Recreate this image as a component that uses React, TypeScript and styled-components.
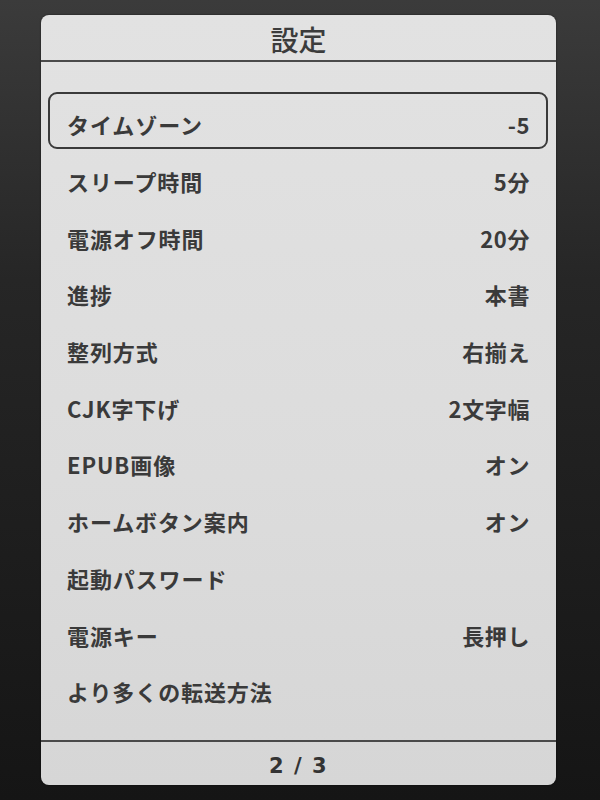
import React from 'react'
import styled, { createGlobalStyle } from 'styled-components'

interface SettingItem {
  label: string
  value?: string
}

const items: SettingItem[] = [
  { label: 'タイムゾーン', value: '-5' },
  { label: 'スリープ時間', value: '5分' },
  { label: '電源オフ時間', value: '20分' },
  { label: '進捗', value: '本書' },
  { label: '整列方式', value: '右揃え' },
  { label: 'CJK字下げ', value: '2文字幅' },
  { label: 'EPUB画像', value: 'オン' },
  { label: 'ホームボタン案内', value: 'オン' },
  { label: '起動パスワード' },
  { label: '電源キー', value: '長押し' },
  { label: 'より多くの転送方法' },
]

const SELECTED = 0

const App: React.FC = () => {
  return (
    <>
      <GlobalStyle />
      <Bezel>
        <Screen>
          {/* 上部タイトル */}
          <Header>設定</Header>

          {/* 設定リスト */}
          <List>
            {items.map((item, idx) => (
              <Row key={item.label} $selected={idx === SELECTED}>
                <Label>{item.label}</Label>
                {item.value && <Value>{item.value}</Value>}
              </Row>
            ))}
          </List>

          {/* ページ番号 */}
          <Footer>2 / 3</Footer>
        </Screen>
      </Bezel>
    </>
  )
}

export default App

// Styled-components
const GlobalStyle = createGlobalStyle`
  html, body {
    margin: 0;
    padding: 0;
    background: #1a1a1a;
  }
  body {
    font-family: 'Noto Sans CJK JP', 'Noto Sans', sans-serif;
  }
`

const Bezel = styled.div`
  width: 600px;
  height: 800px;
  box-sizing: border-box;
  padding: 15px 44px 15px 41px;
  background: linear-gradient(180deg, #3b3b3b 0%, #262626 35%, #151515 100%);
`

const Screen = styled.div`
  height: 100%;
  display: flex;
  flex-direction: column;
  background: linear-gradient(180deg, #e2e2e2 0%, #dcdcdc 60%, #d6d6d6 100%);
  border-radius: 8px;
  overflow: hidden;
  box-shadow: 0 0 2px rgba(0, 0, 0, 0.6);
`

const Header = styled.div`
  height: 47px;
  flex-shrink: 0;
  display: flex;
  align-items: center;
  justify-content: center;
  box-sizing: border-box;
  padding-top: 2px;
  font-size: 28px;
  font-weight: 500;
  color: #3c3c3c;
  border-bottom: 2px solid #4a4a4a;
`

const List = styled.div`
  flex: 1;
  display: flex;
  flex-direction: column;
  padding: 30px 8px 0 7px;
`

const Row = styled.div<{ $selected?: boolean }>`
  height: 56.7px;
  flex-shrink: 0;
  display: flex;
  align-items: center;
  justify-content: space-between;
  box-sizing: border-box;
  padding: 8px 16px 0 17px;
  border: 2px solid ${(p) => (p.$selected ? '#3a3a3a' : 'transparent')};
  border-radius: 9px;
`

const Label = styled.span`
  font-size: 22px;
  font-weight: 700;
  letter-spacing: 0.9px;
  color: #3a3a3a;
`

const Value = styled.span`
  font-size: 22px;
  font-weight: 700;
  letter-spacing: 0.6px;
  color: #3a3a3a;
`

const Footer = styled.div`
  height: 45px;
  flex-shrink: 0;
  display: flex;
  align-items: center;
  justify-content: center;
  box-sizing: border-box;
  padding-top: 4px;
  border-top: 2px solid #4a4a4a;
  font-family: 'DejaVu Sans', 'Noto Sans', sans-serif;
  font-size: 21px;
  font-weight: 700;
  letter-spacing: 1.5px;
  color: #333;
`
